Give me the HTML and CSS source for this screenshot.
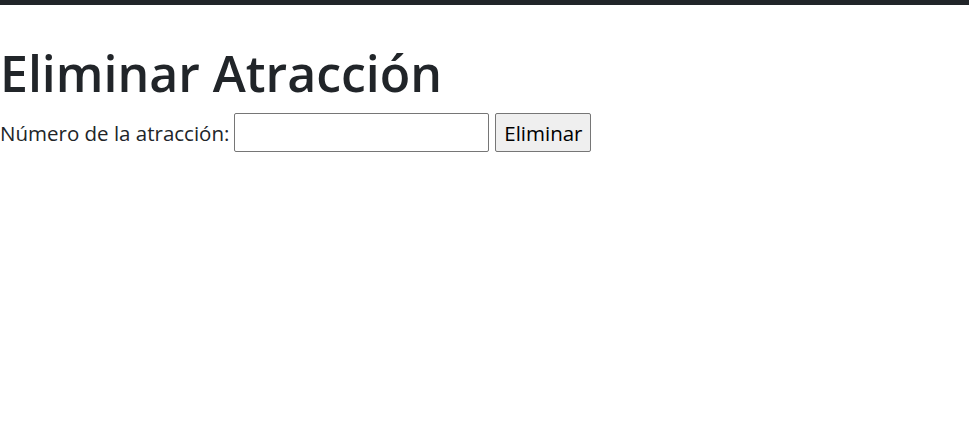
FILE: index.html
```html
<!DOCTYPE html>
<html lang="es">
<head>
<meta charset="utf-8">
<title>Eliminar Atracción</title>
<link rel="stylesheet" href="styles.css">
</head>
<body>
<div class="topbar"></div>
<main class="content">
  <h1 class="title">Eliminar Atracción</h1>
  <form class="form-row">
    <label class="label" for="num">Número de la atracción:</label>
    <input class="field" id="num" type="text">
    <button class="btn" type="button">Eliminar</button>
  </form>
</main>
</body>
</html>
```

FILE: styles.css
```css
html, body {
  margin: 0;
  padding: 0;
  background: #fff;
}
body {
  font-family: "Open Sans", "Noto Sans", sans-serif;
  color: #212529;
  font-size: 20.5px;
  line-height: 30px;
}
.topbar {
  height: 5px;
  background: #212529;
}
.content {
  padding-top: 39px;
}
.title {
  margin: 0 0 10px 0;
  font-size: 50px;
  font-weight: 600;
  letter-spacing: 0;
  line-height: 59px;
  color: #212529;
}
.form-row {
  display: flex;
  align-items: center;
  gap: 5px;
  margin: 0;
}
.label {
  font-size: 20.5px;
}
.field {
  box-sizing: border-box;
  width: 255px;
  height: 39px;
  border: 1px solid #767676;
  border-radius: 2px;
  padding: 0 3px;
  font: inherit;
  margin: 0;
}
.btn {
  box-sizing: border-box;
  height: 39px;
  width: 96px;
  margin-left: 1px;
  border: 1px solid #767676;
  border-radius: 2px;
  background: #efefef;
  color: #000;
  font-family: inherit;
  font-size: 20.5px;
  padding: 0;
}
```
